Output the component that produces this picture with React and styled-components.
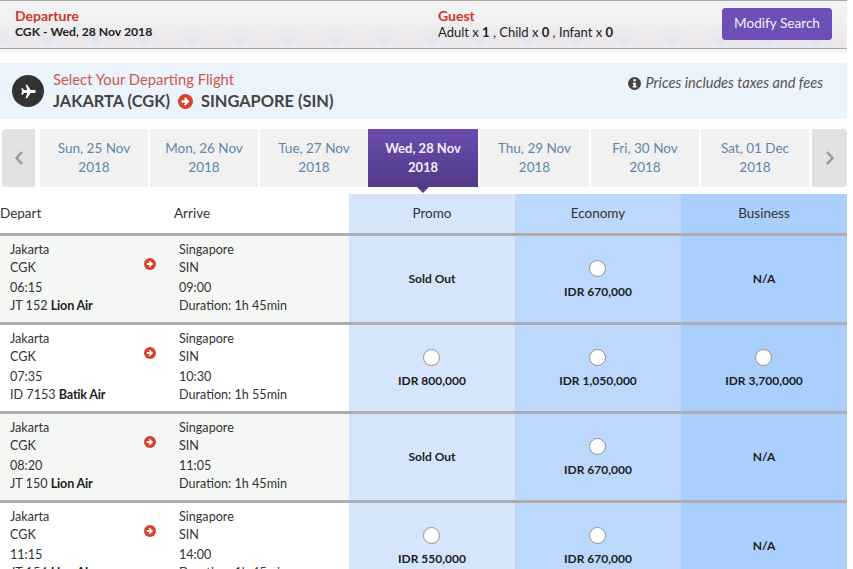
import React from 'react';
import styled, { createGlobalStyle } from 'styled-components';

const Global = createGlobalStyle`
  html, body { margin: 0; padding: 0; background: #fff; overflow: hidden; }
  body { font-family: "Lato", "Noto Sans", sans-serif; color: #333; }
`;

const Page = styled.div`
  width: 853px;
  height: 569px;
  overflow: hidden;
`;

const Main = styled.div`
  width: 847px;
`;

const SearchBar = styled.header`
  box-sizing: border-box;
  width: 847px;
  height: 53px;
  border-top: 1px solid #aaa;
  display: grid;
  grid-template-columns: 438px 284px 110px;
  position: relative;
  background: #f4f4f4;
  &::after {
    content: '';
    position: absolute;
    left: 0;
    right: 0;
    top: 47px;
    height: 1px;
    background: #a5a5ab;
  }
`;

const PatternArt = styled.svg`
  position: absolute;
  left: 0;
  top: 0;
  width: 847px;
  height: 47px;
`;

const InfoBlock = styled.div`
  position: relative;
  padding: 7px 0 0 ${p => p.$pad || 0}px;
  display: flex;
  flex-direction: column;
`;

const InfoTitle = styled.div`
  color: #d0362a;
  font-size: 14px;
  font-weight: 700;
  line-height: 16px;
`;

const InfoLine = styled.div`
  color: #222;
  font-size: ${p => (p.$bold ? 12.2 : 13)}px;
  line-height: 16px;
  font-weight: ${p => (p.$bold ? 700 : 400)};
  b { font-weight: 700; }
`;

const ModifyButton = styled.button`
  position: relative;
  align-self: start;
  box-sizing: border-box;
  margin-top: 7px;
  width: 110px;
  height: 32px;
  border: 1px solid #6a4fb5;
  border-radius: 3px;
  background: #6c50b8;
  color: #f3f0fa;
  font-family: inherit;
  font-size: 13.6px;
  padding: 0 0 2px;
`;

const TitleBar = styled.section`
  margin-top: 10px;
  height: 56px;
  background: #ebf4fc;
  display: flex;
  align-items: center;
  padding-left: 12px;
`;

const PlaneBadge = styled.div`
  width: 32px;
  height: 32px;
  border-radius: 50%;
  background: #333;
  display: flex;
  align-items: center;
  justify-content: center;
  flex: none;
`;

const TitleText = styled.div`
  margin-left: 9px;
  flex: 1;
`;

const TitleSmall = styled.div`
  color: #d2554c;
  font-size: 14.8px;
  line-height: 19px;
`;

const TitleRoute = styled.div`
  margin-top: 1px;
  display: flex;
  align-items: center;
  gap: 8px;
  color: #444;
  font-size: 16.4px;
  font-weight: 700;
  line-height: 22px;
`;

const TaxNote = styled.div`
  display: flex;
  align-items: center;
  gap: 5px;
  align-self: flex-start;
  margin: 12px 24px 0 0;
  font-size: 14.6px;
  line-height: 16px;
  font-style: italic;
  color: #555;
`;

const DateStrip = styled.nav`
  margin-top: 10px;
  padding-left: 2px;
  height: 58px;
  display: flex;
`;

const Arrow = styled.div`
  box-sizing: border-box;
  width: ${p => p.$w}px;
  margin: ${p => p.$m};
  background: #e2e2e2;
  border-radius: ${p => p.$r};
  display: flex;
  align-items: center;
  justify-content: center;
`;

const DateCell = styled.div`
  box-sizing: border-box;
  width: ${p => p.$w}px;
  margin-right: ${p => p.$gap}px;
  position: relative;
  display: flex;
  flex-direction: column;
  align-items: center;
  justify-content: center;
  font-size: ${p => (p.$active ? 13 : 13.5)}px;
  line-height: 19px;
  font-weight: ${p => (p.$active ? 700 : 400)};
  color: ${p => (p.$active ? '#f2eefa' : '#5c87ad')};
  background: ${p => (p.$active ? 'linear-gradient(to bottom, #6b4db0, #523a88)' : '#f1f1f1')};
  ${p => p.$active && `
    &::after {
      content: '';
      position: absolute;
      left: 50%;
      bottom: -6px;
      margin-left: -6px;
      border-left: 6px solid transparent;
      border-right: 6px solid transparent;
      border-top: 6px solid #523a88;
    }
  `}
`;

const TableHead = styled.div`
  margin-top: 7px;
  display: grid;
  grid-template-columns: 174px 175px 166px 166px 166px;
  height: 39px;
  align-items: stretch;
`;

const HeadLabel = styled.div`
  display: flex;
  align-items: center;
  font-size: 13.5px;
  padding-bottom: 2px;
  color: #333;
`;

const Tone = styled.div`
  background: ${p => ['#d5e6fc', '#bcd8fc', '#abcffc'][p.$tier]};
  display: flex;
  align-items: center;
  justify-content: center;
`;

const HeadTone = styled(Tone)`
  font-size: 13.5px;
  padding-bottom: 2px;
  color: #333;
`;

const Row = styled.div`
  display: grid;
  grid-template-columns: 349px 166px 166px 166px;
  height: 86px;
  border-top: 3px solid #aeaeb2;
`;

const RouteCell = styled.div`
  background: ${p => (p.$shade ? '#f5f7f5' : '#fff')};
  display: grid;
  grid-template-columns: 134px 35px 1fr;
  padding: 5px 0 0 10px;
  font-size: 12.6px;
  line-height: 18px;
  color: #333;
  b { font-weight: 700; color: #222; letter-spacing: -0.2px; }
`;

const TimeGroup = styled.div`
  margin-top: 2px;
`;

const ArrowSlot = styled.div`
  padding-top: 17px;
  line-height: 0;
`;

const FareCell = styled(Tone)`
  flex-direction: column;
  font-size: 12px;
  font-weight: 700;
  color: #1d1d1d;
  padding-bottom: 2px;
`;

const Radio = styled.span`
  box-sizing: border-box;
  width: 17px;
  height: 17px;
  border-radius: 50%;
  background: #fff;
  border: 1px solid #8f8f8f;
  margin: 3px 0 7px -2px;
`;

const ArrowCircle = ({ size, color }) => (
  <svg width={size} height={size} viewBox="0 0 24 24">
    <circle cx="12" cy="12" r="12" fill={color} />
    <path d="M5.5 10h6.5L9.5 7.400 11.600 5.300 18.300 12l-6.700 6.700-2.100-2.100L12 14H5.500z" fill="#fff" />
  </svg>
);

const InfoIcon = () => (
  <svg width="13" height="13" viewBox="0 0 24 24">
    <circle cx="12" cy="12" r="12" fill="#444" />
    <rect x="10" y="4" width="4.500" height="4" fill="#fff" />
    <path d="M9 10.500h5.500V17H16v2.500H8.500V17H10v-4H9z" fill="#fff" />
  </svg>
);

const Plane = () => (
  <svg width="17" height="17" viewBox="0 0 24 24">
    <path fill="#fff" d="M22.500 12c0-1.300-1.700-2.200-3-2.200h-4.400L10 2.500H7.800l2.500 7.300H5.600L3.800 7.400H1.800L3 12l-1.200 4.600h2l1.800-2.400h4.700l-2.500 7.300H10l5.100-7.300h4.400c1.300 0 3-.9 3-2.200z" />
  </svg>
);

const HeaderPattern = () => (
  <PatternArt viewBox="0 0 847 47" preserveAspectRatio="none">
    <defs>
      <linearGradient id="fade" x1="0" y1="0" x2="0" y2="1">
        <stop offset="0.3" stopColor="#f2f2f2" stopOpacity="1" />
        <stop offset="1" stopColor="#f2f2f2" stopOpacity="0.25" />
      </linearGradient>
      <filter id="soft"><feGaussianBlur stdDeviation="1.800" /></filter>
      <pattern id="weave" width="48" height="30" patternUnits="userSpaceOnUse" patternTransform="translate(0 20)">
        <rect width="48" height="30" fill="#e4e3ee" />
        <path d="M24 1 36 13 24 25 12 13z" fill="none" stroke="#f0dcd6" strokeWidth="3" />
        <path d="M0 1 12 13 0 25-12 13zM48 1 60 13 48 25 36 13z" fill="#dddcea" />
        <path d="M24 9 28 13 24 17 20 13z" fill="#efd6cb" />
      </pattern>
    </defs>
    <rect width="847" height="47" fill="url(#weave)" filter="url(#soft)" />
    <rect width="847" height="47" fill="url(#fade)" />
  </PatternArt>
);

const dates = [
  ['Sun, 25 Nov', 108, 2], ['Mon, 26 Nov', 108, 2], ['Tue, 27 Nov', 108, 0],
  ['Wed, 28 Nov', 110, 2, true], ['Thu, 29 Nov', 109, 2], ['Fri, 30 Nov', 108, 2], ['Sat, 01 Dec', 108, 3],
];

const flights = [
  { dep: '06:15', arr: '09:00', code: 'JT 152', air: 'Lion Air', dur: '1h 45min', shade: true, fares: [null, 'IDR 670,000', 'N/A'] },
  { dep: '07:35', arr: '10:30', code: 'ID 7153', air: 'Batik Air', dur: '1h 55min', fares: ['IDR 800,000', 'IDR 1,050,000', 'IDR 3,700,000'] },
  { dep: '08:20', arr: '11:05', code: 'JT 150', air: 'Lion Air', dur: '1h 45min', shade: true, fares: [null, 'IDR 670,000', 'N/A'] },
  { dep: '11:15', arr: '14:00', code: 'JT 154', air: 'Lion Air', dur: '1h 45min', fares: ['IDR 550,000', 'IDR 670,000', 'N/A'] },
];

const Fare = ({ value, tier }) => {
  if (value === null) return <FareCell $tier={tier}>Sold Out</FareCell>;
  if (value === 'N/A') return <FareCell $tier={tier}>N/A</FareCell>;
  return (
    <FareCell $tier={tier}>
      <Radio />
      {value}
    </FareCell>
  );
};

export default function App() {
  return (
    <Page>
      <Global />
      <Main>
        <SearchBar>
          <HeaderPattern />
          <InfoBlock $pad={15}>
            <InfoTitle>Departure</InfoTitle>
            <InfoLine $bold>CGK - Wed, 28 Nov 2018</InfoLine>
          </InfoBlock>
          <InfoBlock>
            <InfoTitle>Guest</InfoTitle>
            <InfoLine>Adult x <b>1</b> , Child x <b>0</b> , Infant x <b>0</b></InfoLine>
          </InfoBlock>
          <ModifyButton>Modify Search</ModifyButton>
        </SearchBar>

        <TitleBar>
          <PlaneBadge><Plane /></PlaneBadge>
          <TitleText>
            <TitleSmall>Select Your Departing Flight</TitleSmall>
            <TitleRoute>
              JAKARTA (CGK) <ArrowCircle size={15} color="#d9402e" /> SINGAPORE (SIN)
            </TitleRoute>
          </TitleText>
          <TaxNote><InfoIcon />Prices includes taxes and fees</TaxNote>
        </TitleBar>

        <DateStrip>
          <Arrow $w={33} $m="0 5px 0 0" $r="4px 0 0 4px">
            <svg width="10" height="16" viewBox="0 0 10 16"><path d="M8 2 2.500 8 8 14" fill="none" stroke="#9a9a9a" strokeWidth="2.500" /></svg>
          </Arrow>
          {dates.map(([d, w, gap, active]) => (
            <DateCell key={d} $w={w} $gap={gap} $active={active}>
              <span>{d}</span>
              <span>2018</span>
            </DateCell>
          ))}
          <Arrow $w={35} $m="0" $r="0 4px 4px 0">
            <svg width="10" height="16" viewBox="0 0 10 16"><path d="M2 2 7.500 8 2 14" fill="none" stroke="#9a9a9a" strokeWidth="2.500" /></svg>
          </Arrow>
        </DateStrip>

        <TableHead>
          <HeadLabel>Depart</HeadLabel>
          <HeadLabel>Arrive</HeadLabel>
          <HeadTone $tier={0}>Promo</HeadTone>
          <HeadTone $tier={1}>Economy</HeadTone>
          <HeadTone $tier={2}>Business</HeadTone>
        </TableHead>

        {flights.map(f => (
          <Row key={f.code}>
            <RouteCell $shade={f.shade}>
              <div>
                <div>Jakarta</div>
                <div>CGK</div>
                <TimeGroup>
                  <div>{f.dep}</div>
                  <div>{f.code} <b>{f.air}</b></div>
                </TimeGroup>
              </div>
              <ArrowSlot><ArrowCircle size={12} color="#d9402e" /></ArrowSlot>
              <div>
                <div>Singapore</div>
                <div>SIN</div>
                <TimeGroup>
                  <div>{f.arr}</div>
                  <div>Duration: {f.dur}</div>
                </TimeGroup>
              </div>
            </RouteCell>
            {f.fares.map((v, i) => <Fare key={i} value={v} tier={i} />)}
          </Row>
        ))}
      </Main>
    </Page>
  );
}
